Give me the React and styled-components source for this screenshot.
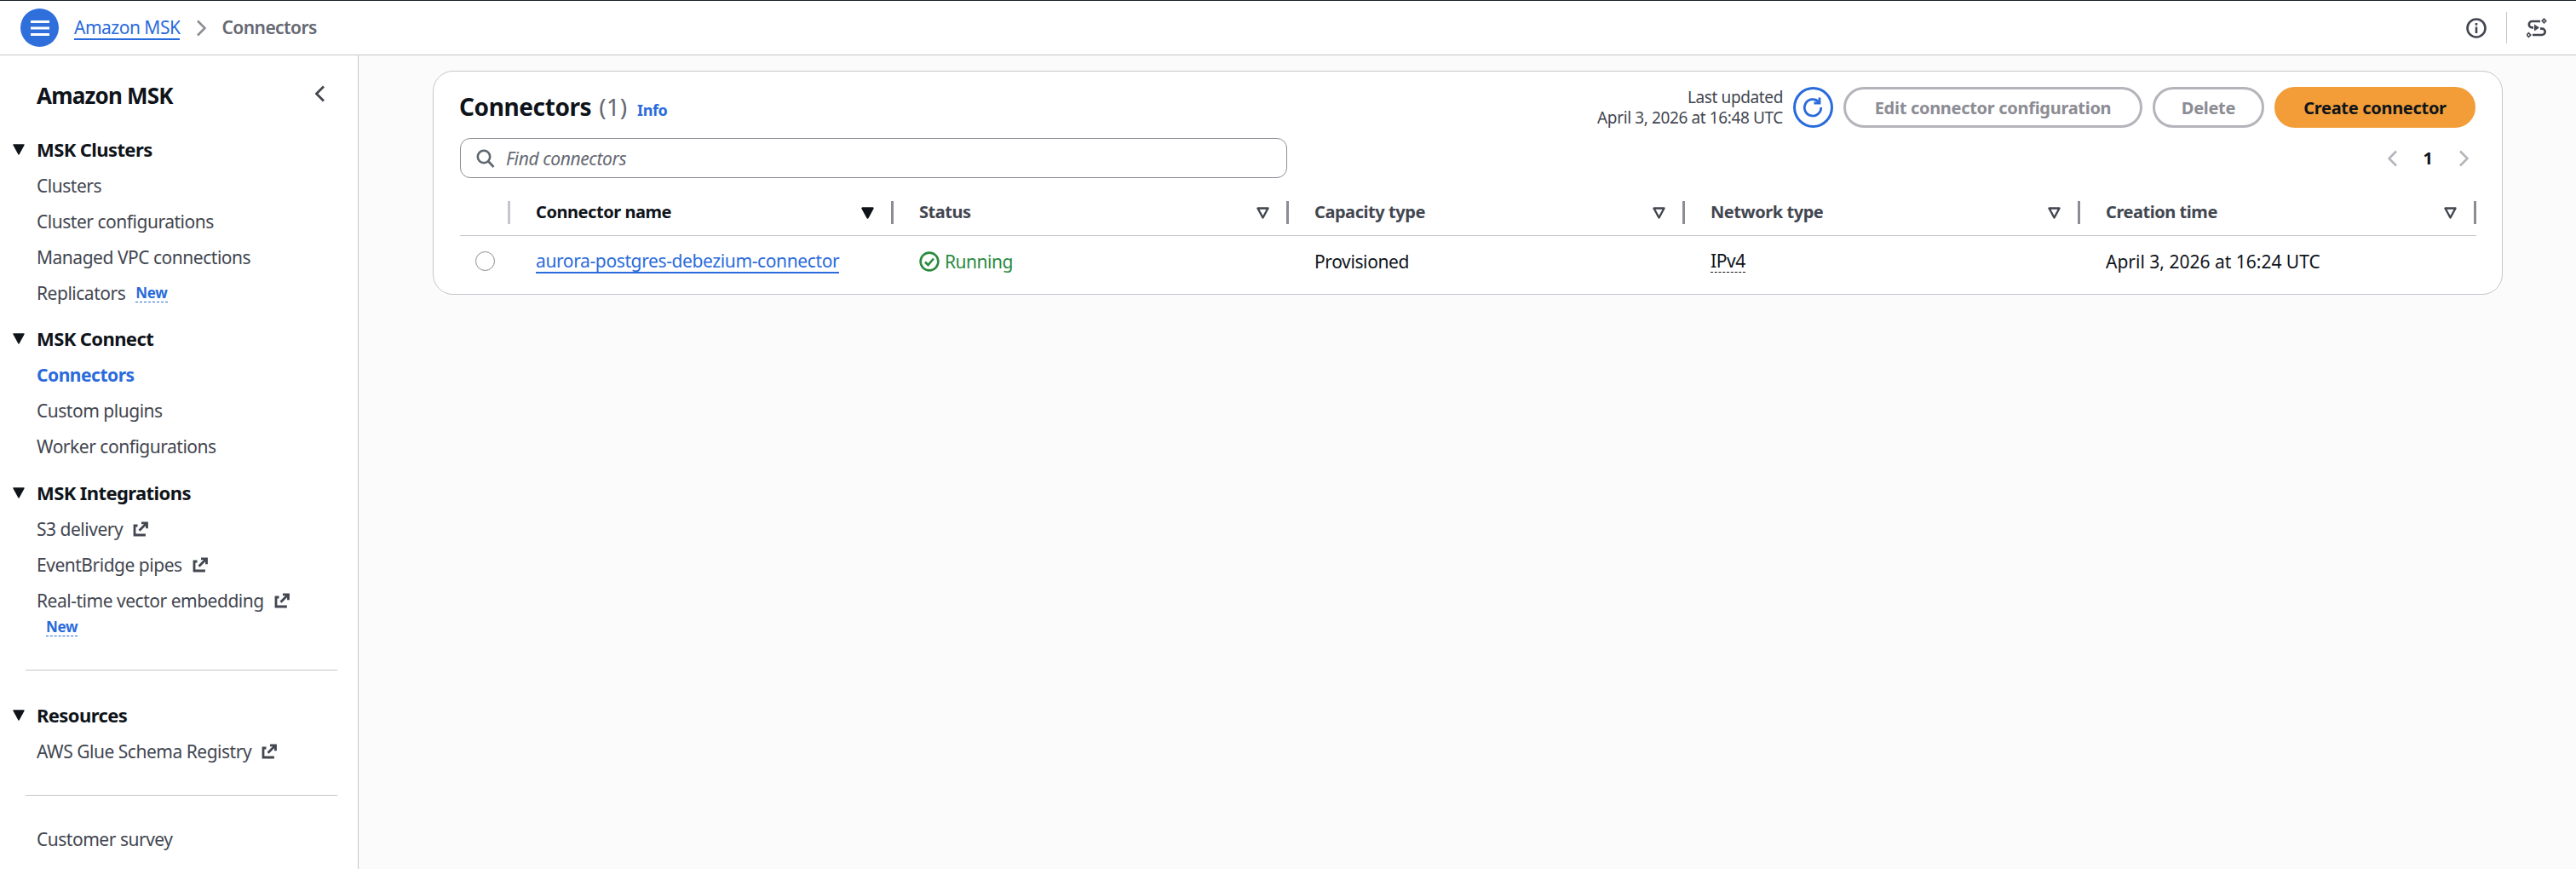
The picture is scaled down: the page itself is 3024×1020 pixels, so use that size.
import React from "react";
import styled, { createGlobalStyle } from "styled-components";

const GlobalStyle = createGlobalStyle`
  html, body {
    margin: 0;
    padding: 0;
    background: #fbfbfb;
    font-family: "Noto Sans", "Open Sans", sans-serif;
    color: #0f141a;
  }
  * { box-sizing: border-box; }
`;

const Shell = styled.div`
  display: flex;
  flex-direction: column;
  height: 1020px;
  overflow: hidden;
  border-top: 1px solid #161d26;
`;

// top bar
const TopBar = styled.header`
  display: flex;
  align-items: center;
  flex: 0 0 64px;
  height: 64px;
  padding: 0 34px 0 24px;
  background: #fff;
  border-bottom: 1px solid #c6c6cd;
`;

const MenuButton = styled.span`
  display: flex;
  align-items: center;
  justify-content: center;
  width: 45px;
  height: 45px;
  border-radius: 50%;
  background: #2f6fdc;
`;

const Crumb = styled.a`
  margin-left: 18px;
  font-size: 21px;
  letter-spacing: -0.5px;
  line-height: 26px;
  color: #2a6bdc;
  border-bottom: 2px solid #2a6bdc;
`;

const CrumbArrow = styled.span`
  display: flex;
  margin: 0 18px 0 19px;
`;

const CrumbCurrent = styled.span`
  padding-bottom: 2px;
  font-size: 21px;
  font-weight: 600;
  letter-spacing: -0.55px;
  color: #656871;
`;

const TopActions = styled.div`
  display: flex;
  align-items: center;
  margin-left: auto;
`;

const TopDivider = styled.span`
  width: 1px;
  height: 37px;
  margin: 0 23px;
  background: #c6c6cd;
`;

// page body
const Body = styled.div`
  display: flex;
  flex: 1;
  min-height: 0;
`;

const Sidebar = styled.nav`
  flex: 0 0 421px;
  background: #fff;
  border-right: 1px solid #c6c6cd;
  padding-top: 26px;
`;

const SideTitleRow = styled.div`
  display: flex;
  align-items: center;
  justify-content: space-between;
  height: 42px;
  padding: 0 38px 0 43px;
  margin-bottom: 22px;
`;

const SideTitle = styled.div`
  font-size: 26px;
  font-weight: 700;
  letter-spacing: -0.8px;
`;

const CollapseIcon = styled.span`
  display: flex;
  padding-bottom: 4px;
`;

const NavSection = styled.div`
  margin-top: ${(props) => props.$gap || 0}px;
`;

const SectionRow = styled.div`
  display: flex;
  align-items: center;
  height: 42px;
  padding: 0 0 2px 15px;
  gap: 14px;
  font-size: 22px;
  font-weight: 700;
  letter-spacing: -0.6px;
`;

const NavItem = styled.div`
  display: flex;
  align-items: center;
  gap: 12px;
  height: 42px;
  padding-left: 43px;
  font-size: 21px;
  letter-spacing: -0.48px;
  font-weight: ${(props) => (props.$active ? 700 : 400)};
  color: ${(props) => (props.$active ? "#2a6bdc" : "#424650")};
`;

const NewBadge = styled.span`
  font-size: 17px;
  font-weight: 700;
  letter-spacing: -0.3px;
  line-height: 21px;
  color: #2a6bdc;
  border-bottom: 1px dashed #2a6bdc;
`;

const NewLine = styled.div`
  display: flex;
  height: 20px;
  align-items: center;
  padding-left: 54px;
`;

const SideDivider = styled.div`
  height: 1px;
  margin: ${(props) => props.$top}px 24px ${(props) => props.$bottom}px 30px;
  background: #c6c6cd;
`;

// main content
const Main = styled.main`
  flex: 1;
  min-width: 0;
  padding: 18px 0 0 87px;
`;

const Card = styled.section`
  width: 2430px;
  height: 263px;
  padding: 18px 31px 0 31px;
  background: #fff;
  border: 1px solid #c6c6cd;
  border-radius: 24px;
`;

const CardTop = styled.div`
  display: flex;
  align-items: center;
  justify-content: space-between;
  height: 48px;
`;

const TitleGroup = styled.div`
  display: flex;
  align-items: baseline;
  gap: 12px;
  margin-left: -1px;
  padding-bottom: 3px;
`;

const Title = styled.h2`
  margin: 0;
  font-size: 28px;
  font-weight: 700;
  letter-spacing: -0.4px;
`;

const Count = styled.span`
  margin-left: 9px;
  font-weight: 400;
  letter-spacing: 0;
  color: #656871;
`;

const InfoLink = styled.a`
  font-size: 18px;
  font-weight: 700;
  letter-spacing: -0.4px;
  color: #2a6bdc;
`;

const Actions = styled.div`
  display: flex;
  align-items: center;
  gap: 12px;
`;

const Updated = styled.div`
  text-align: right;
  font-size: 19px;
  line-height: 24px;
  letter-spacing: -0.38px;
  color: #424650;
`;

const RefreshButton = styled.span`
  display: flex;
  align-items: center;
  justify-content: center;
  width: 47px;
  height: 48px;
  border: 3px solid #2a6bdc;
  border-radius: 50%;
`;

const PillButton = styled.button`
  width: ${(props) => props.$width}px;
  height: 48px;
  padding: 0;
  border-radius: 24px;
  font-family: inherit;
  font-size: 20px;
  font-weight: 700;
  letter-spacing: -0.3px;
  border: 3px solid ${(props) => (props.$primary ? "#f29d38" : "#b4b4bb")};
  background: ${(props) => (props.$primary ? "#f29d38" : "#fff")};
  color: ${(props) => (props.$primary ? "#0f141a" : "#8c8c94")};
`;

const ToolRow = styled.div`
  display: flex;
  align-items: center;
  justify-content: space-between;
  height: 47px;
  margin-top: 12px;
`;

const SearchBox = styled.div`
  display: flex;
  align-items: center;
  gap: 13px;
  width: 971px;
  height: 47px;
  padding-left: 18px;
  border: 1px solid #8c8c94;
  border-radius: 12px;
`;

const SearchText = styled.span`
  font-size: 21px;
  font-style: italic;
  letter-spacing: -0.4px;
  color: #656871;
`;

const Pager = styled.div`
  display: flex;
  align-items: center;
  padding-right: 8px;
  gap: 30px;
`;

const PageNumber = styled.span`
  font-size: 20px;
  font-weight: 700;
`;

const TableGrid = styled.div`
  display: grid;
  grid-template-columns: 59px 450px 464px 465px 464px 465px;
  margin-top: 14px;
`;

const HeadCell = styled.div`
  display: flex;
  align-items: center;
  height: 54px;
  padding-left: ${(props) => (props.$first ? 0 : 30)}px;
  justify-content: ${(props) => (props.$first ? "flex-end" : "flex-start")};
  border-bottom: 1px solid #c6c6cd;
`;

const HeadLabel = styled.span`
  flex: 1;
  padding-bottom: 2px;
  font-size: 20px;
  font-weight: 700;
  letter-spacing: -0.45px;
  color: ${(props) => (props.$sorted ? "#0f141a" : "#424650")};
`;

const Separator = styled.span`
  width: 3px;
  height: 27px;
  margin-left: 20px;
  background: ${(props) => (props.$light ? "#c6c6cd" : "#8c8c94")};
`;

const BodyCell = styled.div`
  display: flex;
  align-items: center;
  height: 59px;
  padding-left: ${(props) => (props.$first ? 18 : 30)}px;
  font-size: 21px;
  letter-spacing: ${(props) => (props.$plain ? 0 : -0.38)}px;
`;

const Radio = styled.span`
  width: 23px;
  height: 23px;
  border: 1.5px solid #8c8c94;
  border-radius: 50%;
`;

const RowLink = styled.a`
  color: #2a6bdc;
  line-height: 26px;
  border-bottom: 2px solid #2a6bdc;
`;

const StatusText = styled.span`
  display: flex;
  align-items: center;
  gap: 6px;
  letter-spacing: -0.5px;
  color: #2b8a3e;
`;

const HintText = styled.span`
  line-height: 25px;
  border-bottom: 1px dashed #0f141a;
`;

const ExternalIcon = () => (
  <svg width="18" height="18" viewBox="0 0 18 18" fill="none" stroke="#424650" strokeWidth="2.8">
    <path d="M5.5 5H2v11h11.5v-1.5" />
    <path d="M10 1.8h6.5v6.5" />
    <path d="M16.2 2 7.5 10.7" />
  </svg>
);

const Caret = () => (
  <svg width="14" height="13" viewBox="0 0 14 13">
    <path d="M1 1h12L7 12z" fill="#0f141a" stroke="#0f141a" strokeWidth="1.5" strokeLinejoin="round" />
  </svg>
);

const SortDown = ({ filled }) => (
  <svg width="15" height="14" viewBox="0 0 15 14">
    <path
      d="M1.5 1.5h12L7.5 12.5z"
      fill={filled ? "#0f141a" : "none"}
      stroke={filled ? "#0f141a" : "#424650"}
      strokeWidth="2.4"
      strokeLinejoin="round"
    />
  </svg>
);

const Chevron = ({ dir = "right", color = "#8c8c94", w = 12, h = 20, sw = 2.6 }) => (
  <svg width={w} height={h} viewBox="0 0 12 20" fill="none" stroke={color} strokeWidth={sw}>
    <path d={dir === "right" ? "M2 1.5 10.5 10 2 18.5" : "M10 1.5 1.5 10 10 18.5"} />
  </svg>
);

const Section = ({ label, gap, children }) => (
  <NavSection $gap={gap}>
    <SectionRow>
      <Caret />
      {label}
    </SectionRow>
    {children}
  </NavSection>
);

const columns = [
  { label: "Connector name", sorted: true },
  { label: "Status" },
  { label: "Capacity type" },
  { label: "Network type" },
  { label: "Creation time" },
];

export default function App() {
  return (
    <Shell>
      <GlobalStyle />
      <TopBar>
        <MenuButton>
          <svg width="22" height="20" viewBox="0 0 22 20" stroke="#fff" strokeWidth="3">
            <path d="M0 2.5h22M0 10h22M0 17.5h22" />
          </svg>
        </MenuButton>
        <Crumb>Amazon MSK</Crumb>
        <CrumbArrow>
          <Chevron />
        </CrumbArrow>
        <CrumbCurrent>Connectors</CrumbCurrent>
        <TopActions>
          <svg width="24" height="24" viewBox="0 0 24 24" fill="none" stroke="#424650" strokeWidth="2.6">
            <circle cx="12" cy="12" r="10.5" />
            <path d="M12 10.5v7.5" />
            <path d="M12 6v2.8" />
          </svg>
          <TopDivider />
          <svg width="24" height="24" viewBox="0 0 24 24" fill="none" stroke="#424650" strokeWidth="2.6">
            <path d="M16 4H6.5a3.7 3.7 0 0 0 0 7.4H8" />
            <path d="M7 20h11a3.7 3.7 0 0 0 0-7.4h-2" />
            <path d="M9 7.5 15 11.5 9 15.5z" fill="#424650" stroke="none" />
            <path d="M20.5 1.2 22.8 3.5 20.5 5.8 18.2 3.5z" strokeWidth="1.6" />
            <path d="M2.5 17.7 4.8 20 2.5 22.3.2 20z" strokeWidth="1.6" />
          </svg>
        </TopActions>
      </TopBar>
      <Body>
        <Sidebar>
          <SideTitleRow>
            <SideTitle>Amazon MSK</SideTitle>
            <CollapseIcon>
              <Chevron dir="left" color="#424650" w={12} h={20} sw={2.8} />
            </CollapseIcon>
          </SideTitleRow>
          <Section label="MSK Clusters">
            <NavItem>Clusters</NavItem>
            <NavItem>Cluster configurations</NavItem>
            <NavItem>Managed VPC connections</NavItem>
            <NavItem>
              Replicators <NewBadge>New</NewBadge>
            </NavItem>
          </Section>
          <Section label="MSK Connect" gap={12}>
            <NavItem $active>Connectors</NavItem>
            <NavItem>Custom plugins</NavItem>
            <NavItem>Worker configurations</NavItem>
          </Section>
          <Section label="MSK Integrations" gap={13}>
            <NavItem>
              S3 delivery <ExternalIcon />
            </NavItem>
            <NavItem>
              EventBridge pipes <ExternalIcon />
            </NavItem>
            <NavItem>
              Real-time vector embedding <ExternalIcon />
            </NavItem>
            <NewLine>
              <NewBadge>New</NewBadge>
            </NewLine>
          </Section>
          <SideDivider $top={40} $bottom={32} />
          <Section label="Resources">
            <NavItem>
              AWS Glue Schema Registry <ExternalIcon />
            </NavItem>
          </Section>
          <SideDivider $top={30} $bottom={30} />
          <NavItem>Customer survey</NavItem>
        </Sidebar>
        <Main>
          <Card>
            <CardTop>
              <TitleGroup>
                <Title>
                  Connectors<Count>(1)</Count>
                </Title>
                <InfoLink>Info</InfoLink>
              </TitleGroup>
              <Actions>
                <Updated>
                  Last updated
                  <br />
                  April 3, 2026 at 16:48 UTC
                </Updated>
                <RefreshButton>
                  <svg width="26" height="26" viewBox="0 0 26 26" fill="none" stroke="#2a6bdc" strokeWidth="2.8">
                    <path d="M19 6.6A9.7 9.7 0 1 0 21.7 13" />
                    <path d="M20 1.5V8h-6.5" />
                  </svg>
                </RefreshButton>
                <PillButton $width={351}>Edit connector configuration</PillButton>
                <PillButton $width={131}>Delete</PillButton>
                <PillButton $width={236} $primary>
                  Create connector
                </PillButton>
              </Actions>
            </CardTop>
            <ToolRow>
              <SearchBox>
                <svg width="22" height="22" viewBox="0 0 22 22" fill="none" stroke="#5f6670" strokeWidth="2.6">
                  <circle cx="9" cy="9" r="7.2" />
                  <path d="m14 14 6.5 7" />
                </svg>
                <SearchText>Find connectors</SearchText>
              </SearchBox>
              <Pager>
                <Chevron dir="left" color="#b4b4bb" />
                <PageNumber>1</PageNumber>
                <Chevron color="#b4b4bb" />
              </Pager>
            </ToolRow>
            <TableGrid>
              <HeadCell $first>
                <Separator $light />
              </HeadCell>
              {columns.map((col) => (
                <HeadCell key={col.label}>
                  <HeadLabel $sorted={col.sorted}>{col.label}</HeadLabel>
                  <SortDown filled={col.sorted} />
                  <Separator />
                </HeadCell>
              ))}
              <BodyCell $first>
                <Radio />
              </BodyCell>
              <BodyCell>
                <RowLink>aurora-postgres-debezium-connector</RowLink>
              </BodyCell>
              <BodyCell>
                <StatusText>
                  <svg width="24" height="24" viewBox="0 0 24 24" fill="none" stroke="#2b8a3e" strokeWidth="2.6">
                    <circle cx="12" cy="12" r="10.4" />
                    <path d="m7 12.5 3.5 3.5L17 8.5" />
                  </svg>
                  Running
                </StatusText>
              </BodyCell>
              <BodyCell>Provisioned</BodyCell>
              <BodyCell>
                <HintText>IPv4</HintText>
              </BodyCell>
              <BodyCell $plain>April 3, 2026 at 16:24 UTC</BodyCell>
            </TableGrid>
          </Card>
        </Main>
      </Body>
    </Shell>
  );
}
